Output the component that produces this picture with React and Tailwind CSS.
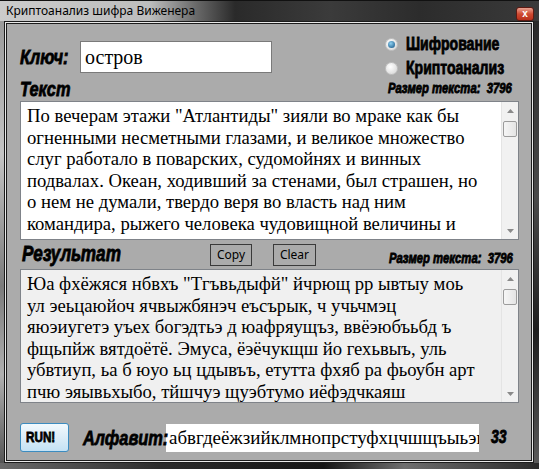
import React from "react";

const label =
  "font-['Liberation_Sans',sans-serif] font-bold text-black [-webkit-text-stroke:0.8px_#000]";
const serif = "font-['Liberation_Serif','Times_New_Roman',serif]";

const sourceLines = [
  'По вечерам этажи "Атлантиды" зияли во мраке как бы',
  "огненными несметными глазами, и великое множество",
  "слуг работало в поварских, судомойнях и винных",
  "подвалах. Океан, ходивший за стенами, был страшен, но",
  "о нем не думали, твердо веря во власть над ним",
  "командира, рыжего человека чудовищной величины и",
];

const resultLines = [
  'Юа фхёжяся нбвхъ "Тгъвьдыфй" йчрющ рр ывтыу моь',
  "ул эеьцаюйоч ячвыжбянэч еъсърык, ч учьчмэц",
  "яюэиугетэ уъех богэдтьэ д юафряущъз, ввёэюбъьбд ъ",
  "фщьпйж вятдоётё. Эмуса, ёэёчукщш йо гехьвыъ, уль",
  "убвтиуп, ьа б юуо ьц цдывъъ, етутта фхяб ра фьоубн арт",
  "пчю эяывьхыбо, тйшчуэ щуэбтумо иёфэдчкаяш",
];

// condensed heavy label (the app uses an Impact-like face)
const Cond = ({ children, className = "", right }) => (
  <span
    className={`inline-block whitespace-nowrap scale-x-[0.78] ${right ? "origin-right" : "origin-left"} ${label} ${className}`}
  >
    {children}
  </span>
);

const Arrow = ({ down }) => (
  <svg width="7" height="4" viewBox="0 0 7 4">
    <path d={down ? "M0 0h7L3.5 4z" : "M0 4h7L3.5 0z"} fill="#8a8a8a" />
  </svg>
);

const Scrollbar = () => (
  <div className="w-[17px] flex flex-col items-stretch bg-[#f1f1f1] border-l border-[#e4e4e4]">
    <div className="h-[17px] flex items-center justify-center">
      <Arrow />
    </div>
    <div className="mx-[1px] mt-[2px] h-[16px] rounded-[2px] border border-[#9c9c9c] bg-[linear-gradient(to_right,#f6f6f6,#e4e4e4)]" />
    <div className="flex-1" />
    <div className="h-[17px] flex items-center justify-center">
      <Arrow down />
    </div>
  </div>
);

const TextBox = ({ lines, height, bg }) => (
  <div className={`flex border border-[#7f8389] ${bg} ${height}`}>
    <div className={`flex-1 overflow-hidden pl-[6px] pt-[3px] text-[18.67px] leading-[21.5px] text-black ${serif}`}>
      {lines.map((l) => (
        <div key={l} className="whitespace-nowrap">
          {l}
        </div>
      ))}
    </div>
    <Scrollbar />
  </div>
);

const Radio = ({ checked, text }) => (
  <div className="h-[24px] flex items-center">
    <div className="shrink-0 w-[13px] h-[13px] rounded-full border border-[#c2c2c2] bg-[radial-gradient(circle_at_40%_35%,#ffffff,#d2d2d2)] flex items-center justify-center">
      {checked && (
        <div className="w-[7px] h-[7px] rounded-full bg-[radial-gradient(circle_at_40%_35%,#8fd0f0,#0f4f80)]" />
      )}
    </div>
    <div className="shrink-0 w-[8px]" />
    <div className="shrink-0 w-[106px]">
      <Cond className="text-[18px] leading-[20px]">{text}</Cond>
    </div>
  </div>
);

const SizeText = () => (
  <Cond right className="italic text-[14.5px] leading-[16px] [-webkit-text-stroke:0.4px_#000]">
    Размер текста:&nbsp;&nbsp;3796
  </Cond>
);

const FlatButton = ({ children, width }) => (
  <div
    className={`${width} h-[22px] flex items-center justify-center border border-[#3a3a3a] bg-[#ababab] text-[12px] text-black font-['Noto_Sans','Open_Sans',sans-serif]`}
  >
    {children}
  </div>
);

export default function App() {
  return (
    <div className="w-[539px] h-[469px] flex flex-col overflow-hidden bg-[#2e2e2e]">
      <div className="h-[21px] flex items-center border-t border-[#111] bg-[linear-gradient(to_right,#cbcbcb_0px,#bdbdbd_150px,#6b6b6b_195px,#2a2a2a_235px,#3b3b3b_330px,#2c2c2c_420px,#3a3a3a_539px)]">
        <span className="ml-[6px] text-[12px] leading-none text-black font-['Noto_Sans','Open_Sans',sans-serif]">
          Криптоанализ шифра Виженера
        </span>
        <div className="ml-auto mr-[5px] mt-[6px] w-[18px] h-[14px] rounded-[3px] border border-[#5e1a12] bg-[linear-gradient(to_bottom,#e9a392,#cf4a31_50%,#b8301b)] flex items-center justify-center">
          <span className="text-white text-[10px] leading-none font-bold font-['Liberation_Sans',sans-serif]">x</span>
        </div>
      </div>

      <div className="flex-1 flex">
        <div className="w-[4px] bg-[linear-gradient(to_bottom,#9a9a9a,#c4c4c4_30%,#7b7b7b_60%,#b0b0b0_80%,#555)]" />
        <div className="flex-1 border border-[#1c1c1c]">
          <div className="h-full border border-[#e9e9e9]">
            <div className="h-full flex flex-col border border-[#1c1c1c] bg-[#ababab] pl-[13px] pr-[12px]">
              {/* top */}
              <div className="h-[77px] flex">
                <div className="flex flex-col pt-[17px]">
                  <div className="h-[32px] flex items-center">
                    <div className="w-[60px]">
                      <Cond className="italic text-[21px]">Ключ:</Cond>
                    </div>
                    <input
                      readOnly
                      value="остров"
                      className={`w-[192px] h-[32px] bg-white border border-[#7a7a7a] pl-[4px] text-[20px] text-black outline-none ${serif}`}
                    />
                  </div>
                  <div className="mt-[6px] h-[20px] flex items-center">
                    <Cond className="italic text-[21px] leading-[20px]">Текст</Cond>
                  </div>
                </div>
                <div className="ml-auto mr-[7px] w-[130px] flex flex-col pt-[8px] pl-[3px]">
                  <Radio checked text="Шифрование" />
                  <Radio text="Криптоанализ" />
                  <div className="h-[16px] flex items-center justify-end">
                    <SizeText />
                  </div>
                </div>
              </div>

              <TextBox lines={sourceLines} height="h-[139px]" bg="bg-white" />

              {/* result row */}
              <div className="h-[29px] flex items-center">
                <div className="w-[190px] pl-[2px]">
                  <Cond className="italic text-[22px] leading-[20px]">Результат</Cond>
                </div>
                <FlatButton width="w-[42px]">Copy</FlatButton>
                <div className="w-[21px]" />
                <FlatButton width="w-[43px]">Clear</FlatButton>
                <div className="ml-auto mr-[6px] mt-[4px]">
                  <SizeText />
                </div>
              </div>

              <TextBox lines={resultLines} height="h-[134px]" bg="bg-[#f0f0f0]" />

              {/* bottom */}
              <div className="h-[57px] flex items-start pt-[20px]">
                <div className="w-[49px] h-[29px] rounded-[3px] border border-[#3c8cc0] bg-[linear-gradient(to_bottom,#f2f9fd,#dcedf8_50%,#c4e2f5)] flex items-center justify-center">
                  <Cond className="text-[15px] origin-center [-webkit-text-stroke:0.4px_#000]">RUN!</Cond>
                </div>
                <div className="w-[14px]" />
                <div className="h-[29px] flex items-center w-[83px]">
                  <Cond className="italic text-[21px]">Алфавит:</Cond>
                </div>
                <input
                  readOnly
                  value="абвгдеёжзийклмнопрстуфхцчшщъыьэюя"
                  className={`w-[313px] h-[28px] mt-[1px] bg-white pl-[3px] text-[19px] text-black outline-none ${serif}`}
                />
                <div className="h-[29px] flex items-center ml-[12px]">
                  <Cond className="italic text-[18px]">33</Cond>
                </div>
              </div>
            </div>
          </div>
        </div>
        <div className="w-[5px] bg-[linear-gradient(to_bottom,#2a2a2a,#4a4a4a_40%,#1e1e1e_70%,#5a5a5a)]" />
      </div>
      <div className="h-[6px] bg-[linear-gradient(to_right,#6a6a6a,#2a2a2a_30%,#151515_60%,#6e6e6e_75%,#2a2a2a)]" />
    </div>
  );
}
